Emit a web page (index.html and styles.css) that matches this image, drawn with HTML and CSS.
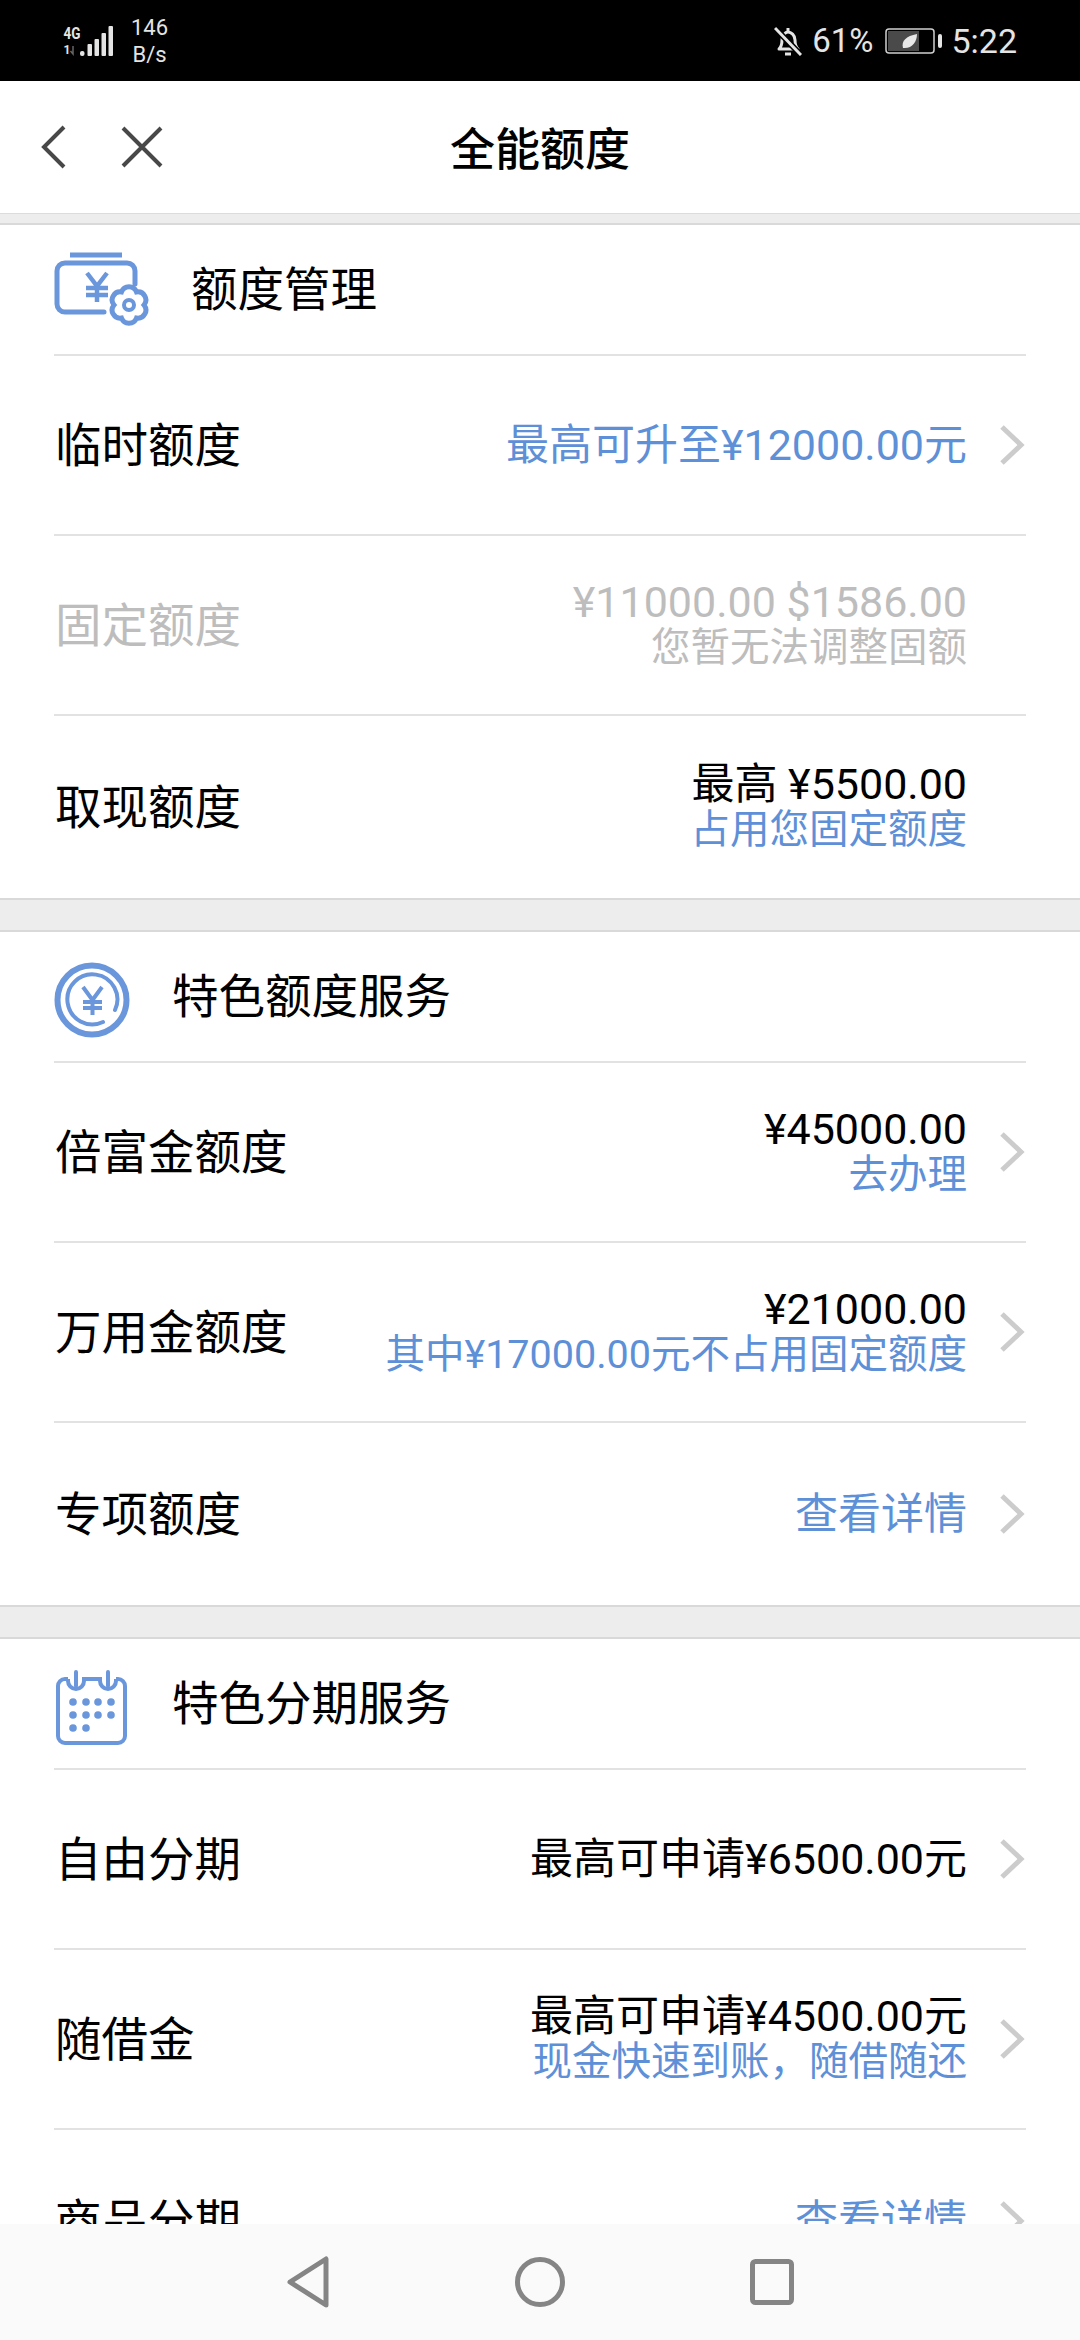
FILE: index.html
```html
<!DOCTYPE html>
<html lang="zh-CN">
<head>
    <meta charset="UTF-8">
    <meta name="viewport" content="width=device-width, initial-scale=1.0">
    <title>全能额度</title>
    <link rel="stylesheet" href="styles.css">
</head>
<body>
    <div class="phone">
        <div class="status-bar">
            <div class="status-left">
                <svg class="signal" width="50" height="30" viewBox="0 0 50 30">
                    <text class="signal-text" x="0.500" y="13" textLength="17" lengthAdjust="spacingAndGlyphs">4G</text>
                    <text class="signal-text small" x="0.500" y="28">1</text>
                    <path d="M10 20v8l-2.500-3" fill="none" stroke="#666" stroke-width="1.500"/>
                    <g fill="#e4e4e4">
                        <rect x="17" y="25" width="4.500" height="5" rx="2"/>
                        <rect x="24.500" y="18" width="4.500" height="12" rx="1"/>
                        <rect x="31.500" y="13" width="4.500" height="17" rx="1"/>
                        <rect x="38.500" y="7" width="4.500" height="23" rx="1"/>
                        <rect x="45.500" y="0" width="4.500" height="30" rx="1"/>
                    </g>
                </svg>
                <div class="net-speed">146<br>B/s</div>
            </div>
            <div class="status-right">
                <svg width="28" height="30" viewBox="0 0 28 30">
                    <path d="M5 23c2-2 3-4 3-9 0-4 3-8 6-8s7 3 7 8c0 5 1 7 3 9z" fill="none" stroke="#e4e4e4" stroke-width="3" stroke-linejoin="round"/>
                    <path d="M14 6V2" stroke="#e4e4e4" stroke-width="3"/>
                    <path d="M1 2l26 27" stroke="#000" stroke-width="6"/>
                    <path d="M1 2l26 27" stroke="#e4e4e4" stroke-width="3"/>
                    <path d="M11 28h6" stroke="#e4e4e4" stroke-width="3"/>
                </svg>
                <span class="battery-pct">61%</span>
                <svg width="57" height="26" viewBox="0 0 57 26">
                    <rect x="1" y="1" width="48" height="24" rx="3" fill="none" stroke="#cfcfcf" stroke-width="1.500"/>
                    <rect x="3" y="3" width="31" height="20" fill="#4a4a4a"/>
                    <path d="M18 20c-2-7 3-12 14-14 0 8-5 15-14 14z" fill="#e8e8e8"/>
                    <rect x="53" y="6" width="4" height="14" rx="2" fill="#e4e4e4"/>
                </svg>
                <span class="clock">5:22</span>
            </div>
        </div>

        <header class="title-bar">
            <svg class="back-icon" width="30" height="44" viewBox="0 0 30 44">
                <path d="M25 2L5 22l20 20" fill="none" stroke="#484848" stroke-width="4"/>
            </svg>
            <svg class="close-icon" width="42" height="42" viewBox="0 0 42 42">
                <path d="M2 2l38 38M40 2L2 40" fill="none" stroke="#484848" stroke-width="4"/>
            </svg>
            <h1>全能额度</h1>
        </header>

        <section class="panel">
            <div class="panel-head">
                <svg class="icon-wallet" width="96" height="76" viewBox="0 0 96 76">
                    <path d="M16 3h52" stroke="#6a96dc" stroke-width="5"/>
                    <path d="M50 60H11a8 8 0 0 1-8-8V19a8 8 0 0 1 8-8h62a8 8 0 0 1 8 8v13" fill="none" stroke="#6a96dc" stroke-width="5" stroke-linecap="round"/>
                    <path d="M33 21l10 13 10-13M43 34v16M32 36h22M32 43h22" fill="none" stroke="#6a96dc" stroke-width="4.500"/>
                    <path d="M90 53A8 8 0 0 1 82.500 66A8 8 0 0 1 67.500 66A8 8 0 0 1 60 53A8 8 0 0 1 67.500 40A8 8 0 0 1 82.500 40A8 8 0 0 1 90 53z" fill="#fff" stroke="#6a96dc" stroke-width="5"/>
                    <circle cx="75" cy="53" r="5" fill="none" stroke="#6a96dc" stroke-width="4"/>
                </svg>
                <span class="panel-title">额度管理</span>
            </div>
            <div class="row">
                <span class="row-label">临时额度</span>
                <div class="row-value"><div class="main blue">最高可升至¥12000.00元</div></div>
                <svg class="chevron" width="26" height="42" viewBox="0 0 26 42"><path d="M3 3l19 18L3 39" fill="none" stroke="#ccc" stroke-width="5"/></svg>
            </div>
            <div class="row">
                <span class="row-label muted">固定额度</span>
                <div class="row-value muted"><div class="main">¥11000.00 $1586.00</div><div class="sub">您暂无法调整固额</div></div>
                <div class="chevron-space"></div>
            </div>
            <div class="row">
                <span class="row-label">取现额度</span>
                <div class="row-value"><div class="main">最高 ¥5500.00</div><div class="sub blue">占用您固定额度</div></div>
                <div class="chevron-space"></div>
            </div>
        </section>

        <section class="panel">
            <div class="panel-head">
                <svg class="panel-icon" width="76" height="76" viewBox="0 0 76 76">
                    <circle cx="38" cy="38" r="34.500" fill="none" stroke="#6a96dc" stroke-width="6"/>
                    <path d="M61 48A25 25 0 1 0 49 60" fill="none" stroke="#6a96dc" stroke-width="4" stroke-linecap="round"/>
                    <path d="M29 25l9.500 13 9.500-13M38.500 38v15M29 40h19M29 46h19" fill="none" stroke="#6a96dc" stroke-width="4"/>
                </svg>
                <span class="panel-title">特色额度服务</span>
            </div>
            <div class="row">
                <span class="row-label">倍富金额度</span>
                <div class="row-value"><div class="main">¥45000.00</div><div class="sub blue">去办理</div></div>
                <svg class="chevron" width="26" height="42" viewBox="0 0 26 42"><path d="M3 3l19 18L3 39" fill="none" stroke="#ccc" stroke-width="5"/></svg>
            </div>
            <div class="row">
                <span class="row-label">万用金额度</span>
                <div class="row-value"><div class="main">¥21000.00</div><div class="sub blue">其中¥17000.00元不占用固定额度</div></div>
                <svg class="chevron" width="26" height="42" viewBox="0 0 26 42"><path d="M3 3l19 18L3 39" fill="none" stroke="#ccc" stroke-width="5"/></svg>
            </div>
            <div class="row">
                <span class="row-label">专项额度</span>
                <div class="row-value"><div class="main blue">查看详情</div></div>
                <svg class="chevron" width="26" height="42" viewBox="0 0 26 42"><path d="M3 3l19 18L3 39" fill="none" stroke="#ccc" stroke-width="5"/></svg>
            </div>
        </section>

        <section class="panel">
            <div class="panel-head">
                <svg class="panel-icon" width="76" height="76" viewBox="0 0 76 76">
                    <path d="M14 10H11a7 7 0 0 0-7 7v50a7 7 0 0 0 7 7h53a7 7 0 0 0 7-7V17a7 7 0 0 0-7-7h-2M14 10v2a8 8 0 0 0 16 0v-2H46v2a8 8 0 0 0 16 0v-2" fill="none" stroke="#6a96dc" stroke-width="4"/>
                    <path d="M22 3v14M54 3v14" stroke="#6a96dc" stroke-width="4" stroke-linecap="round"/>
                    <g fill="#6a96dc">
                        <circle cx="19" cy="33" r="3.800"/><circle cx="32" cy="33" r="3.800"/><circle cx="44" cy="33" r="3.800"/><circle cx="57" cy="33" r="3.800"/>
                        <circle cx="19" cy="46" r="3.800"/><circle cx="32" cy="46" r="3.800"/><circle cx="44" cy="46" r="3.800"/><circle cx="57" cy="46" r="3.800"/>
                        <circle cx="19" cy="59" r="3.800"/><circle cx="32" cy="59" r="3.800"/>
                    </g>
                </svg>
                <span class="panel-title">特色分期服务</span>
            </div>
            <div class="row">
                <span class="row-label">自由分期</span>
                <div class="row-value"><div class="main">最高可申请¥6500.00元</div></div>
                <svg class="chevron" width="26" height="42" viewBox="0 0 26 42"><path d="M3 3l19 18L3 39" fill="none" stroke="#ccc" stroke-width="5"/></svg>
            </div>
            <div class="row">
                <span class="row-label">随借金</span>
                <div class="row-value"><div class="main">最高可申请¥4500.00元</div><div class="sub blue">现金快速到账，随借随还</div></div>
                <svg class="chevron" width="26" height="42" viewBox="0 0 26 42"><path d="M3 3l19 18L3 39" fill="none" stroke="#ccc" stroke-width="5"/></svg>
            </div>
            <div class="row">
                <span class="row-label">商品分期</span>
                <div class="row-value"><div class="main blue">查看详情</div></div>
                <svg class="chevron" width="26" height="42" viewBox="0 0 26 42"><path d="M3 3l19 18L3 39" fill="none" stroke="#ccc" stroke-width="5"/></svg>
            </div>
        </section>

        <nav class="nav-bar">
            <svg width="44" height="52" viewBox="0 0 44 52">
                <path d="M40 3v46L4 26z" fill="none" stroke="#858585" stroke-width="5" stroke-linejoin="round"/>
            </svg>
            <svg width="50" height="50" viewBox="0 0 50 50">
                <circle cx="25" cy="25" r="22.500" fill="none" stroke="#858585" stroke-width="5"/>
            </svg>
            <svg width="44" height="46" viewBox="0 0 44 46">
                <rect x="2.500" y="2.500" width="39" height="41" rx="3" fill="none" stroke="#858585" stroke-width="5"/>
            </svg>
        </nav>
    </div>
</body>
</html>
```

FILE: styles.css
```css
:root {
    --blue: #5e90d8;
    --muted: #bdbdbd;
    --line: #e2e2e2;
    --gap: #ededed;
    --gap-border: #d9d9d9;
}

* {
    margin: 0;
    padding: 0;
    box-sizing: border-box;
}

html, body {
    width: 1080px;
    height: 2340px;
    overflow: hidden;
}

body {
    font-family: Roboto, "Noto Sans CJK SC", sans-serif;
    color: #000;
    background: var(--gap);
}

.phone {
    position: relative;
    width: 1080px;
    height: 2340px;
    overflow: hidden;
}

.status-bar {
    height: 81px;
    background: #000;
    color: #e4e4e4;
    display: flex;
    align-items: center;
    justify-content: space-between;
    padding: 0 63px;
}

.status-left {
    display: flex;
    align-items: center;
    gap: 18px;
}

.signal {
    overflow: visible;
}

.signal-text {
    font-family: Roboto, sans-serif;
    font-size: 17px;
    font-weight: 700;
    fill: #e4e4e4;
}

.signal-text.small {
    font-size: 12px;
}

.net-speed {
    font-size: 22px;
    line-height: 27px;
    text-align: center;
}

.status-right {
    display: flex;
    align-items: center;
    gap: 10px;
}

.battery-pct {
    font-size: 33px;
    margin-right: 2px;
}

.clock {
    font-size: 34px;
    margin-left: -1px;
}

.title-bar {
    position: relative;
    height: 133px;
    background: #fff;
    border-bottom: 1px solid #dcdcdc;
    display: flex;
    align-items: center;
    padding-left: 39px;
}

.close-icon {
    margin-left: 52px;
}

.title-bar h1 {
    position: absolute;
    left: 0;
    right: 0;
    text-align: center;
    font-size: 45px;
    font-weight: 500;
    padding-bottom: 2px;
}

.panel {
    background: #fff;
    border-top: 2px solid var(--gap-border);
    border-bottom: 2px solid var(--gap-border);
    padding: 0 54px;
    margin-bottom: 30px;
}

.panel:first-of-type {
    margin-top: 9px;
}

.panel-head {
    height: 131px;
    display: flex;
    align-items: center;
    gap: 42px;
    border-bottom: 2px solid var(--line);
}

.panel-title {
    font-size: 46.500px;
    padding-bottom: 8px;
}

.icon-wallet {
    margin-right: -1px;
}

.panel-icon {
    margin-top: 6px;
}

.row {
    height: 180px;
    display: flex;
    align-items: center;
    border-bottom: 2px solid var(--line);
    padding-left: 1px;
}

.row:last-child {
    height: 182px;
    border-bottom: none;
}

.row-label {
    font-size: 46.500px;
    padding-bottom: 8px;
}

.row-value {
    margin-left: auto;
    text-align: right;
    line-height: 46px;
}

.main {
    font-size: 43px;
}

.sub {
    font-size: 39.500px;
}

.chevron {
    margin-left: 32px;
    margin-right: 1px;
}

.chevron-space {
    width: 59px;
}

.blue {
    color: var(--blue);
}

.muted {
    color: var(--muted);
}

.nav-bar {
    position: absolute;
    left: 0;
    right: 0;
    bottom: 0;
    height: 116px;
    background: #fafafa;
    display: flex;
    align-items: center;
    justify-content: center;
    gap: 185px;
}
```
